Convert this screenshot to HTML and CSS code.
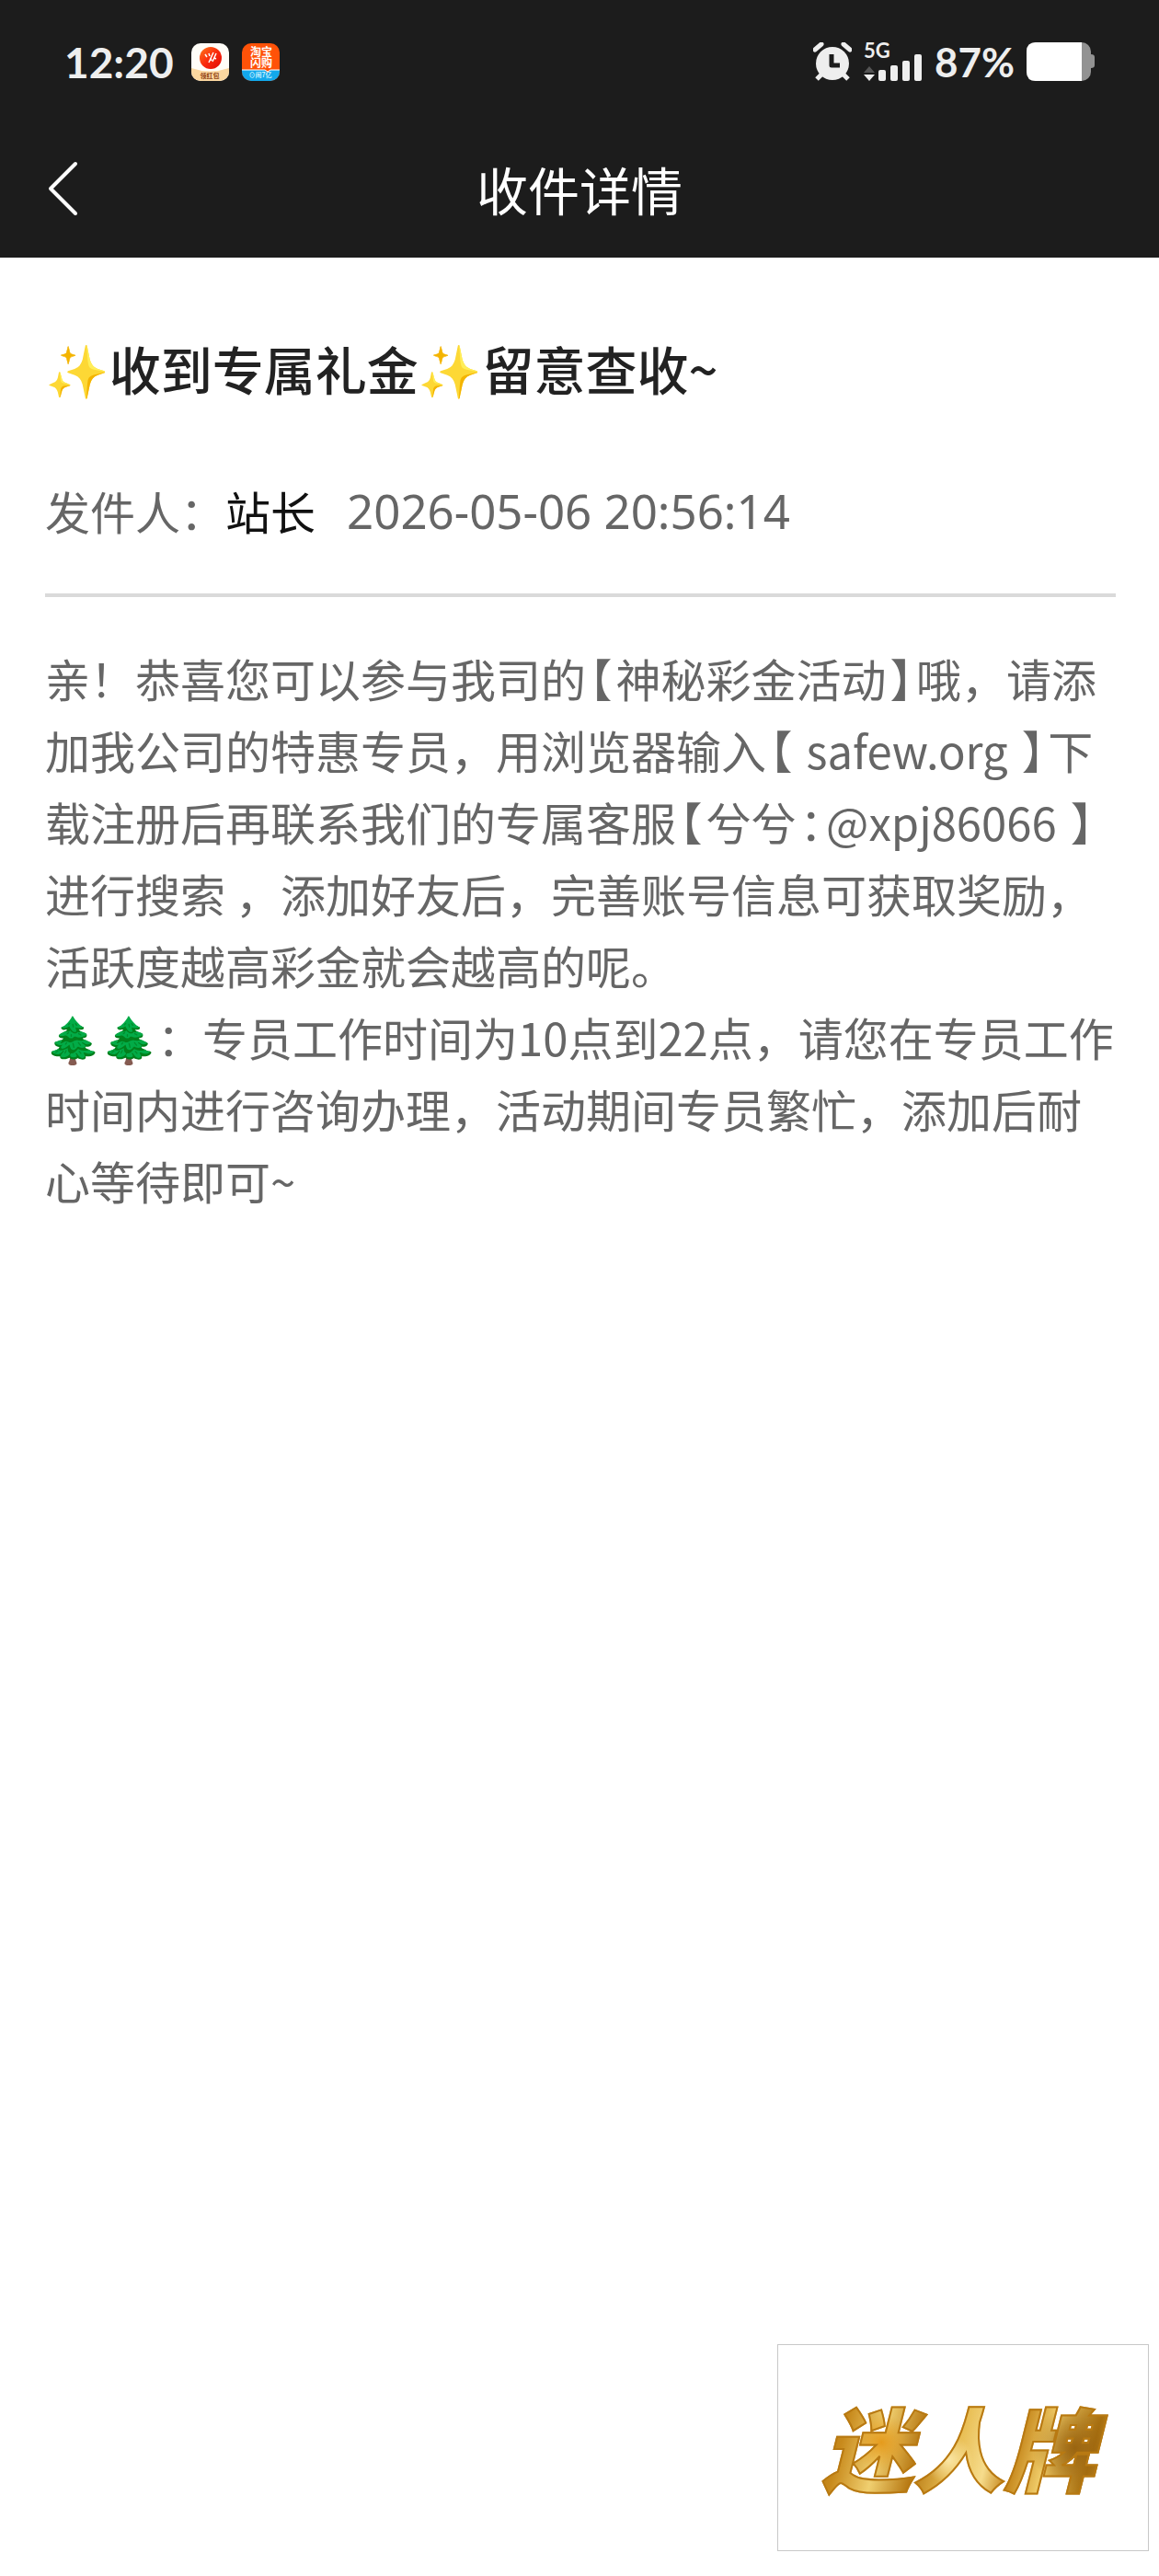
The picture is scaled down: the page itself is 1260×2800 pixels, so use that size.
FILE: index.html
```html
<!DOCTYPE html>
<html lang="zh-CN">
<head>
<meta charset="utf-8">
<meta name="viewport" content="width=device-width, initial-scale=1">
<title>收件详情</title>
<link rel="stylesheet" href="styles.css">
</head>
<body>
<header class="top">
  <div class="status">
    <div class="status-left">
      <span class="clock">12:20</span>
      <svg class="app" viewBox="0 0 41 41">
        <defs>
          <clipPath id="round"><rect width="41" height="41" rx="10"/></clipPath>
          <linearGradient id="ball" x1="0" y1="0" x2="1" y2="1">
            <stop offset="0" stop-color="#ff7a1c"/><stop offset=".5" stop-color="#fa2a0c"/><stop offset="1" stop-color="#e00808"/>
          </linearGradient>
        </defs>
        <g clip-path="url(#round)">
          <rect width="41" height="41" fill="#fffdf8"/>
          <path d="M0 27Q20 34 41 27V41H0z" fill="#fbd7a0"/>
          <circle cx="21" cy="16" r="12" fill="url(#ball)"/>
          <path d="M15 12l2 3M19 11l1 3M24 10l-5 11M21 16l1 3M27 11l-4 9M25 16l2 1" stroke="#fff" stroke-width="1.5" fill="none"/>
          <text class="app-text" x="20" y="38" font-size="7" fill="#8f3d0c">领红包</text>
        </g>
      </svg>
      <svg class="app" viewBox="0 0 41 41">
        <g clip-path="url(#round)">
          <rect width="41" height="41" fill="#ff5208"/>
          <path d="M0 29h25l3 3 3-3h10v12H0z" fill="#12a8ec"/>
          <path d="M0 29h25l3 2 3-2h10" stroke="#fff" fill="none"/>
          <text class="app-text" x="21" y="14" font-size="12" fill="#fff">淘宝</text>
          <text class="app-text" x="21" y="26" font-size="12" fill="#fff">闪购</text>
          <text class="app-text" x="20" y="37" font-size="7" fill="#c9f1ff">⊙闹7亿</text>
        </g>
      </svg>
    </div>
    <div class="status-right">
      <svg class="alarm" viewBox="0 0 42 42">
        <path d="M2 8l7-6M40 8l-7-6" stroke="#eee" stroke-width="5" stroke-linecap="round"/>
        <path d="M10 34l-6 6M32 34l6 6" stroke="#eee" stroke-width="5"/>
        <circle cx="21" cy="23" r="18" fill="#eee"/>
        <path d="M20 13v12h9" stroke="#1c1c1c" stroke-width="5" stroke-linejoin="round" fill="none"/>
      </svg>
      <svg class="signal" viewBox="0 0 64 42">
        <text class="net" x="0" y="17" font-size="22" fill="#eee">5G</text>
        <path d="M0 33l6-7 6 7z" fill="#555"/>
        <path d="M0 35h12l-6 7z" fill="#eee"/>
        <g fill="#eee">
          <rect x="16" y="30" width="8" height="12" rx="2"/>
          <rect x="29" y="25" width="8" height="17" rx="2"/>
          <rect x="42" y="20" width="8" height="22" rx="2"/>
          <rect x="55" y="13" width="8" height="29" rx="2"/>
        </g>
      </svg>
      <span class="percent">87%</span>
      <svg class="battery" viewBox="0 0 74 42">
        <rect width="70" height="42" rx="10" fill="#929292"/>
        <path d="M70 13q4 0 4 3v9q0 3-4 3z" fill="#929292"/>
        <path d="M10 0h50v42H10Q0 42 0 32V10Q0 0 10 0z" fill="#fff"/>
      </svg>
    </div>
  </div>
  <nav class="bar">
    <button class="back" type="button" aria-label="返回">
      <svg viewBox="0 0 34 60"><path d="M31 3L4 30l27 27" fill="none" stroke="#fff" stroke-width="4" stroke-linecap="round" stroke-linejoin="round"/></svg>
    </button>
    <h1>收件详情</h1>
  </nav>
</header>

<main class="mail">
  <h2>✨收到专属礼金✨留意查收~</h2>
  <div class="meta">
    <span>发件人：<b>站长</b></span>
    <time datetime="2026-05-06T20:56:14">2026-05-06 20:56:14</time>
  </div>
  <div class="content">
    <p>亲！恭喜您可以参与我司的<i>【</i>神秘彩金活动<i>】</i>哦，请添加我公司的特惠专员，用浏览器输入<i>【</i> safew.org <i>】</i>下载注册后再联系我们的专属客服<i>【</i>兮兮<i>：</i>@xpj86066 <i>】</i>进行搜索 ，添加好友后，完善账号信息可获取奖励，活跃度越高彩金就会越高的呢。</p>
    <p>🌲🌲：专员工作时间为10点到22点，请您在专员工作时间内进行咨询办理，活动期间专员繁忙，添加后耐心等待即可~</p>
  </div>
</main>

<a class="float" href="#"><span>迷人牌</span></a>
</body>
</html>
```
FILE: styles.css
```css
* { box-sizing: border-box; }
body {
  margin: 0;
  background: #fff;
  color: #666;
  font-family: "Noto Sans CJK SC", "Noto Color Emoji", sans-serif;
  font-size: 49px;
}
h1, h2, p { margin: 0; font-weight: 400; }

.top { padding-bottom: 4px; background: #1c1c1c; color: #fff; }
.status {
  display: flex; justify-content: space-between; align-items: center;
  height: 134px; padding: 0 70px;
  color: #eee;
}
.status-left, .status-right { display: flex; align-items: center; }
.status-left  { gap: 14px; }
.status-right { gap: 13px; }
.clock   { font-family: Lato, sans-serif; font-size: 46px; font-weight: 700; margin-right: 5px; }
.percent { font-family: Lato, sans-serif; font-size: 44px; font-weight: 700; }
.app     { width: 41px; height: 41px; }
.alarm   { width: 42px; height: 42px; }
.signal  { width: 64px; height: 42px; overflow: visible; }
.battery { width: 74px; height: 42px; }
.app-text {
  font-family: "Noto Sans CJK SC", sans-serif;
  font-weight: 700;
  text-anchor: middle;
}
.net { font-family: Lato, sans-serif; font-weight: 700; }

.bar {
  display: grid; grid-template-columns: 134px 1fr 134px; align-items: center;
  height: 142px;
}
.bar h1 {
  color: #fff;
  font-size: 56px; line-height: 80px;
  text-align: center;
}
.back {
  display: flex;
  padding: 0 0 0 50px;
  border: 0; background: none;
  cursor: pointer;
}
.back svg { width: 36px; height: 60px; }

.mail { padding: 80px 47px 0 49px; }
.mail h2 {
  color: #222;
  font-size: 56px; font-weight: 500; line-height: 80px;
}
.meta {
  display: flex; gap: 34px;
  margin-top: 76px; padding-bottom: 51px;
  border-bottom: 4px solid #dadada;
  line-height: 78px;
}
.meta b { color: #111; font-weight: 400; }
.meta time { font-family: "Noto Sans", sans-serif; font-size: 51px; }

.content { padding-top: 49px; line-height: 78px; }
/* narrow brackets and colon */
.content i {
  font-style: normal;
  font-feature-settings: "halt";
  margin: 0 4px;
}

.float {
  position: fixed; right: 11px; bottom: 27px;
  display: flex; align-items: center; justify-content: center;
  width: 404px; height: 225px;
  border: 1px solid #c8c8c8;
  background: #fff;
  text-decoration: none;
}
.float span {
  padding: 0 16px 6px 6px;
  font-size: 99px; font-weight: 900; font-style: italic; line-height: 120px;
  color: transparent;
  -webkit-text-stroke: 2px #b87912;
  background:
    radial-gradient(circle at 22% 45%, #e49a1c 0, transparent 12%),
    radial-gradient(circle at 45% 60%, #fbe7a6 0, transparent 14%),
    radial-gradient(circle at 88% 50%, #9a6410 0, transparent 16%),
    linear-gradient(105deg, #a86f10 0, #c88a1c 12%, #f0cf70 24%, #b87a14 36%, #e8bd52 48%, #f6dc8c 58%, #c48418 66%, #efcb68 76%, #a9700f 90%, #d9a53a 100%);
  -webkit-background-clip: text;
  background-clip: text;
}
```
